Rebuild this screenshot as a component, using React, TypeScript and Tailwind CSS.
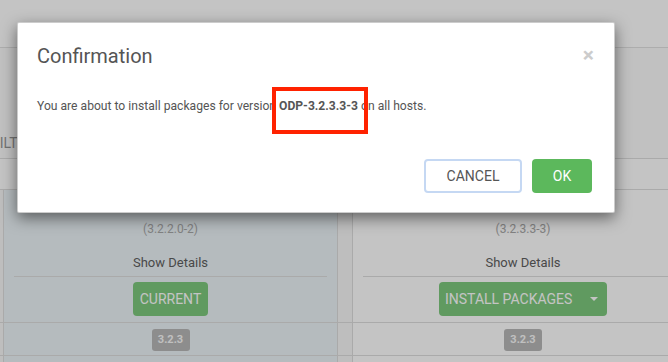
import React from "react";

const font = { fontFamily: "Roboto, 'Liberation Sans', sans-serif" };

function VersionColumn({
  name,
  build,
  current,
  highlight,
  width,
}: {
  name: string;
  build: string;
  current: boolean;
  highlight: boolean;
  width: string;
}) {
  const bg = highlight ? "bg-[#ecf4f8]" : "bg-white";
  return (
    <div className={`flex flex-col ${width}`}>
      {/* main cell */}
      <div className={`flex h-[134px] flex-col items-center border-x border-y border-[#dddddd] ${bg}`}>
        <div className="mt-[1px] h-[18px] text-[14px] leading-[18px] text-[#555]">{name}</div>
        <div className="mt-[12px] text-[12px] leading-[16px] text-[#a8a8a8]">({build})</div>
        <div className="mt-[17px] text-[13px] leading-[18px] text-[#606060]">Show Details</div>
        <div className="mt-[4px] h-0 self-stretch mx-[10px] border-t border-[#dddddd]" />
        {current ? (
          <button className="mt-[5px] flex h-[34px] w-[75px] items-center justify-center rounded-[4px] bg-[#7dc97d] text-[14px] text-white">
            CURRENT
          </button>
        ) : (
          <button className="mt-[5px] flex h-[34px] w-[168px] items-center rounded-[4px] bg-[#7dc97d] pl-[6px] text-[14px] text-white">
            <span>INSTALL PACKAGES</span>
            <span className="ml-[18px] h-0 w-0 border-x-[4px] border-t-[4px] border-x-transparent border-t-white" />
          </button>
        )}
      </div>
      {/* repo version row */}
      <div className={`flex h-[33px] justify-center border-x border-b border-[#dddddd] pt-[6px] ${bg}`}>
        <span className="flex h-[22px] w-[38px] items-center justify-center rounded-[3px] bg-[#b8b8b8] text-[11px] font-bold text-[#fafafa]">
          3.2.3
        </span>
      </div>
      <div className={`h-[40px] border-x border-b border-[#dddddd] ${bg}`} />
    </div>
  );
}

function Spacer({ width }: { width: string }) {
  return (
    <div className={`flex flex-col bg-[#f7f7f7] ${width}`}>
      <div className="h-[134px] border-y border-[#dddddd]" />
      <div className="h-[33px] border-b border-[#dddddd]" />
      <div className="h-[40px] border-b border-[#dddddd]" />
    </div>
  );
}

export default function App() {
  return (
    <div className="relative h-[362px] w-[668px] overflow-hidden bg-white" style={font}>
      {/* page behind the dialog */}
      <div className="h-[48px] border-b border-[#e2e2e2] bg-white" />
      <div className="flex h-[111px] items-end border-b border-[#dddddd] bg-[#fbfbfb] pb-[5px]">
        <span className="-ml-[8px] text-[14px] leading-[20px] text-[#969696]">FILTER</span>
      </div>
      <div className="mt-[30px] flex">
        <Spacer width="w-[3px] shrink-0" />
        <VersionColumn
          name="ODP-3.2.2.0"
          build="3.2.2.0-2"
          current
          highlight
          width="w-[335px] shrink-0"
        />
        <Spacer width="w-[14px] shrink-0" />
        <VersionColumn
          name="ODP-3.2.3.3"
          build="3.2.3.3-3"
          current={false}
          highlight={false}
          width="w-[342px] shrink-0"
        />
      </div>

      {/* modal backdrop */}
      <div className="absolute inset-0 bg-black/[0.23]">
        <div className="relative ml-[17px] mt-[22px] h-[191px] w-[598px] rounded-[2px] border border-black/20 bg-white shadow-[0_5px_15px_rgba(0,0,0,0.5)]">
          <div className="flex items-center justify-between pl-[19px] pr-[20px] pt-[19px]">
            <h4 className="text-[20px] leading-[28px] text-[#555]">Confirmation</h4>
            <button className="-mt-[3px] text-[21px] font-bold leading-[28px] text-[#cccccc]">×</button>
          </div>
          <p className="mt-[27px] pl-[19px] text-[12.13px] leading-[18px] text-[#555]">
            You are about to install packages for version <b className="font-bold">ODP-3.2.3.3-3</b> on all hosts.
          </p>
          <div className="mt-[44px] flex justify-end gap-[10px] pr-[22px]">
            <button className="flex h-[34px] w-[98px] items-center justify-center rounded-[4px] border-2 border-[#c5d8f3] bg-white text-[14px] text-[#555]">
              CANCEL
            </button>
            <button className="flex h-[34px] w-[60px] items-center justify-center rounded-[4px] bg-[#5cb85c] text-[14px] text-white">
              OK
            </button>
          </div>

          {/* annotation highlight */}
          <div className="absolute left-[254px] top-[64px] h-[47px] w-[96px] border-[4px] border-[#ff2200]" />
        </div>
      </div>
    </div>
  );
}
